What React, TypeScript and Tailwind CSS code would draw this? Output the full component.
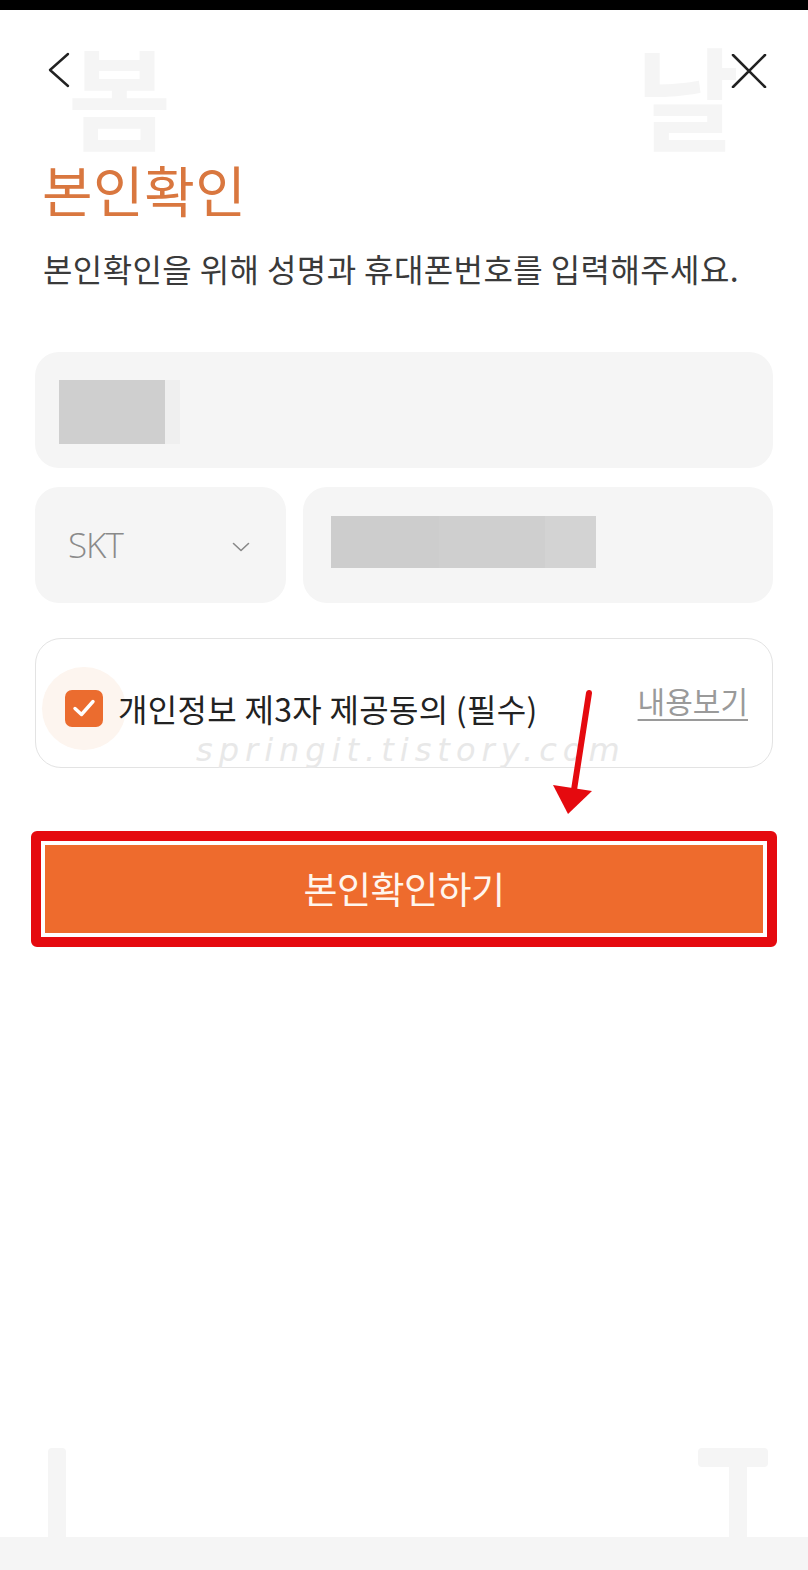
import React from 'react';

const kr = { fontFamily: '"Noto Sans CJK KR", "Noto Sans", sans-serif' };

export default function App() {
    return (
        <div className="relative w-[808px] h-[1570px] overflow-hidden bg-white flex flex-col" style={kr}>
            {/* faint background letters */}
            <div className="absolute left-[68px] top-[44px] text-[112px] font-bold leading-[100px] text-[#f5f5f5]">봄</div>
            <div className="absolute left-[636px] top-[44px] text-[112px] font-bold leading-[100px] text-[#f5f5f5]">날</div>
            <div className="absolute left-[48px] top-[1448px] w-[18px] h-[92px] rounded-t-[4px] bg-[#f5f5f5]"></div>
            <div className="absolute left-[698px] top-[1448px] w-[70px] h-[19px] rounded-[4px] bg-[#f5f5f5]"></div>
            <div className="absolute left-[729px] top-[1460px] w-[18px] h-[80px] bg-[#f5f5f5]"></div>

            <div className="h-[10px] bg-black"></div>

            <div className="relative flex-1 flex flex-col">
                <div className="flex justify-between items-start pt-[42px] pl-[47px] pr-[41px]">
                    <svg width="24" height="36" viewBox="0 0 24 36" fill="none">
                        <path d="M21 2 L3 18 L21 34" stroke="#222" strokeWidth="2.4" strokeLinecap="round" strokeLinejoin="round" />
                    </svg>
                    <svg width="36" height="34" viewBox="0 0 36 34" fill="none" className="mt-[2px]">
                        <path d="M2 1 L34 33 M34 1 L2 33" stroke="#222" strokeWidth="2.6" strokeLinecap="round" />
                    </svg>
                </div>

                <h1 className="mt-[69px] pl-[42px] text-[55px] font-normal leading-[62px] tracking-[0.5px] text-[#d9773f]">본인확인</h1>
                <p className="mt-[29px] pl-[43px] text-[32px] leading-[40px] tracking-[0.4px] text-[#3a3a3a]">
                    본인확인을 위해 성명과 휴대폰번호를 입력해주세요.
                </p>

                <div className="mt-[64px] mx-[35px] h-[116px] rounded-[24px] bg-[#f5f5f5] pl-[24px] pt-[28px] flex">
                    <div className="w-[106px] h-[64px] bg-[#cfcfcf]"></div>
                    <div className="w-[15px] h-[64px] bg-[#efefef]"></div>
                </div>

                <div className="mt-[19px] mx-[35px] flex gap-[17px]">
                    <div className="w-[251px] h-[116px] rounded-[24px] bg-[#f5f5f5] flex items-center justify-between pl-[33px] pr-[36px]">
                        <span className="text-[35px] font-light text-[#8a8a8a] tracking-[-1px]" style={{ fontFamily: '"Open Sans", "Noto Sans", sans-serif' }}>SKT</span>
                        <svg width="18" height="10" viewBox="0 0 18 10" fill="none" className="mt-[4px]">
                            <path d="M1.5 1.5 L9 8.5 L16.5 1.5" stroke="#888" strokeWidth="1.6" strokeLinecap="round" strokeLinejoin="round" />
                        </svg>
                    </div>
                    <div className="flex-1 h-[116px] rounded-[24px] bg-[#f5f5f5] pl-[28px] pt-[29px]">
                        <div className="flex h-[52px]">
                            <div className="w-[108px] bg-[#cdcdcd]"></div>
                            <div className="w-[106px] bg-[#cfcfcf]"></div>
                            <div className="w-[51px] bg-[#d3d3d3]"></div>
                        </div>
                    </div>
                </div>

                <div className="mt-[35px] mx-[35px] h-[130px] rounded-[26px] border-[1.5px] border-[#e3e3e3] flex items-center pt-[10px] pl-[29px] pr-[24px]">
                    <div className="relative w-[38px] h-[37px] shrink-0">
                        <div className="absolute -inset-[23px] rounded-full bg-[#fdf5ef]"></div>
                        <div className="relative w-[38px] h-[37px] rounded-[7px] bg-[#eb6c2f] flex items-center justify-center">
                            <svg width="24" height="20" viewBox="0 0 24 20" fill="none">
                                <path d="M3 10.5 L9.5 16.5 L21 3.5" stroke="#fff" strokeWidth="3.4" strokeLinecap="round" strokeLinejoin="round" />
                            </svg>
                        </div>
                    </div>
                    <span className="relative ml-[15px] text-[32px] leading-[40px] tracking-[0.3px] text-[#222]">개인정보 제3자 제공동의 (필수)</span>
                    <span className="ml-auto pb-[17px] text-[30px] leading-[40px] text-[#9a9a9a] underline underline-offset-[6px] decoration-[1.5px]">내용보기</span>
                </div>

                <div className="mt-[63px] mx-[31px] border-[10px] border-[#e50a0f] rounded-[6px] p-[4px] bg-white">
                    <div className="h-[88px] bg-[#ee6b2d] flex items-center justify-center text-[37px] tracking-[-0.5px] text-[#fff6ee]">
                        본인확인하기
                    </div>
                </div>

                <div className="flex-1"></div>
                <div className="h-[33px] bg-[#f5f5f5]"></div>
            </div>

            {/* watermark and annotation arrow */}
            <div className="absolute left-[196px] top-[726px] text-[32px] italic font-light tracking-[6px] text-[#e8e8e8]" style={{ fontFamily: '"DejaVu Sans", sans-serif' }}>
                springit.tistory.com
            </div>
            <svg className="absolute left-[540px] top-[680px]" width="70" height="140" viewBox="540 680 70 140" fill="none">
                <path d="M589 693 L574 790" stroke="#e50a0f" strokeWidth="6" strokeLinecap="round" />
                <polygon points="553,785 592,791 568,814" fill="#e50a0f" />
            </svg>
        </div>
    );
}
